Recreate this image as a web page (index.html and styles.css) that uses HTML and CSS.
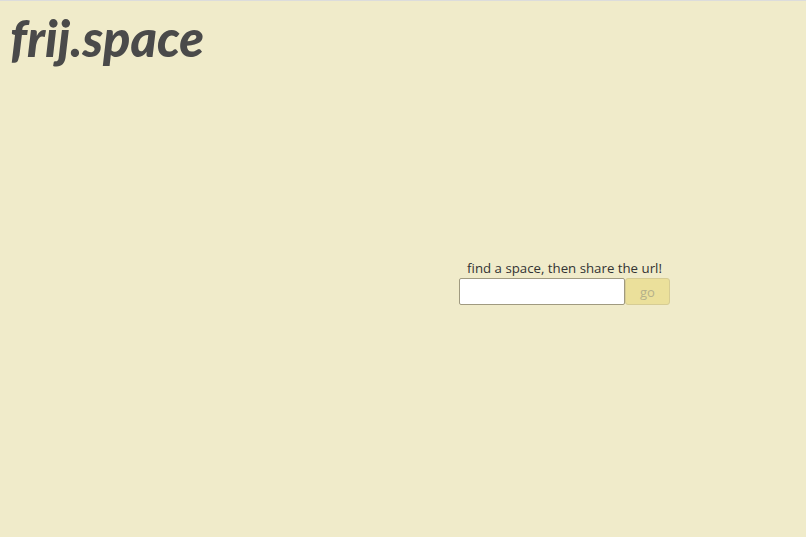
FILE: index.html
```html
<!DOCTYPE html>
<html lang="en">
<head>
    <meta charset="utf-8">
    <title>frij.space</title>
    <link rel="stylesheet" href="styles.css">
</head>
<body>
    <div class="page">
        <h1 class="logo">frij.space</h1>
        <div class="finder">
            <form class="finderBox">
                <label class="hint" for="space">find a space, then share the url!</label>
                <div class="row">
                    <input type="text" id="space" class="spaceInput">
                    <button type="button" class="goButton" disabled>go</button>
                </div>
            </form>
        </div>
    </div>
</body>
</html>
```

FILE: styles.css
```css
html, body {
    margin: 0;
    height: 100%;
}

body {
    background-color: #f0ebca;
    border-top: 1px solid #dcdcdc;
    box-sizing: border-box;
    font-family: "Open Sans", "Noto Sans", sans-serif;
    font-variant-ligatures: none;
    color: #333;
}

.page {
    height: 100%;
    display: flex;
    flex-direction: column;
}

.logo {
    margin: 0;
    padding: 6px 0 0 10px;
    font-family: "Lato", sans-serif;
    font-style: italic;
    font-weight: 900;
    font-size: 50.5px;
    line-height: 62px;
    color: #4a4a4a;
}

.finder {
    display: flex;
    justify-content: flex-end;
    padding: 190px 136px 0 0;
}

.finderBox {
    display: flex;
    flex-direction: column;
    align-items: center;
}

.hint {
    font-size: 13.25px;
    line-height: 19px;
}

.row {
    display: flex;
}

.spaceInput {
    width: 166px;
    height: 27px;
    box-sizing: border-box;
    border: 1px solid #a09a80;
    border-radius: 2px;
    background: #fff;
}

.goButton {
    width: 45px;
    height: 27px;
    box-sizing: border-box;
    border: 1px solid #d6cc94;
    border-radius: 3px;
    background: #ebe09b;
    color: #b5b08a;
    font-family: inherit;
    font-size: 13px;
}
```
